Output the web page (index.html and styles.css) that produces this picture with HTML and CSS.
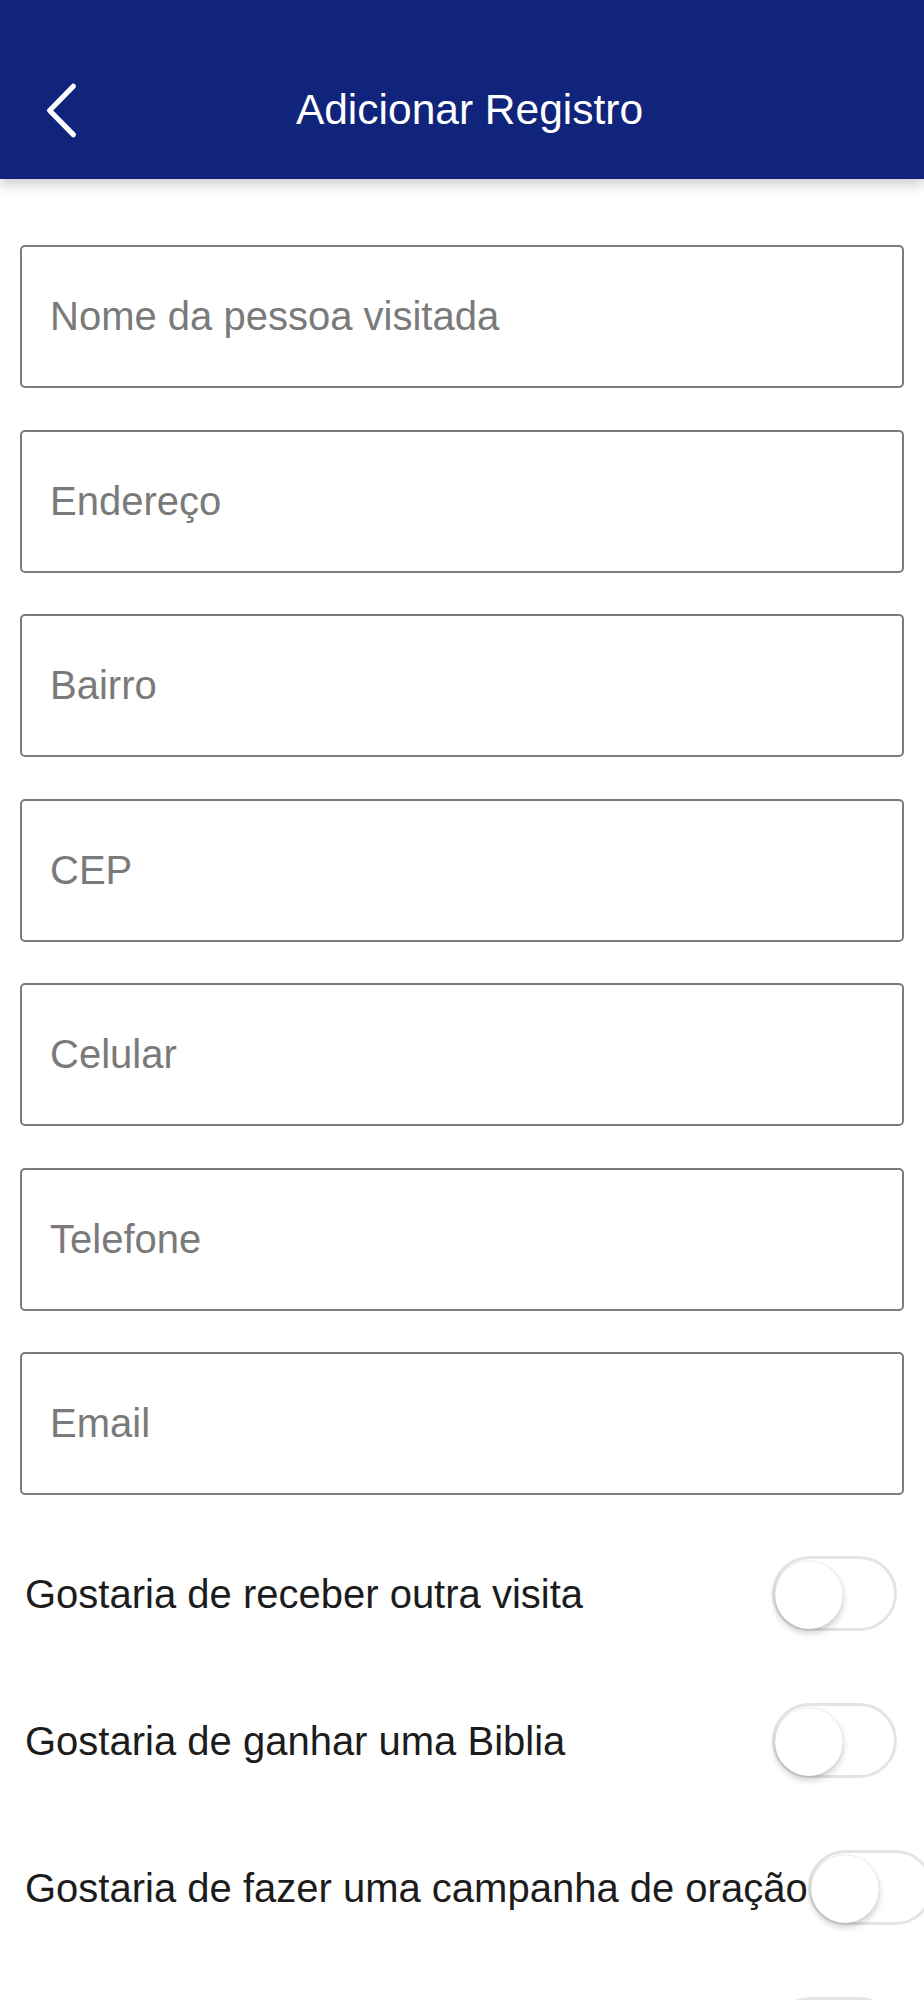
FILE: index.html
```html
<!DOCTYPE html>
<html lang="pt-BR">
<head>
<meta charset="utf-8">
<title>Adicionar Registro</title>
<link rel="stylesheet" href="styles.css">
</head>
<body>
<header class="topbar">
  <div class="topbar-row">
    <button class="back" aria-label="Voltar">
      <svg width="40" height="60" viewBox="0 0 40 60" aria-hidden="true">
        <polyline points="33,5 8,30.5 33,56" fill="none" stroke="#ffffff" stroke-width="5.5" stroke-linecap="round" stroke-linejoin="round"/>
      </svg>
    </button>
    <h1 class="title">Adicionar Registro</h1>
    <div class="spacer"></div>
  </div>
</header>
<main class="form">
  <input class="field" type="text" placeholder="Nome da pessoa visitada">
  <input class="field" type="text" placeholder="Endereço">
  <input class="field" type="text" placeholder="Bairro">
  <input class="field" type="text" placeholder="CEP">
  <input class="field" type="text" placeholder="Celular">
  <input class="field" type="text" placeholder="Telefone">
  <input class="field" type="text" placeholder="Email">

  <div class="switch-row">
    <span class="switch-label">Gostaria de receber outra visita</span>
    <span class="toggle"><span class="knob"></span></span>
  </div>
  <div class="switch-row">
    <span class="switch-label">Gostaria de ganhar uma Biblia</span>
    <span class="toggle"><span class="knob"></span></span>
  </div>
  <div class="switch-row">
    <span class="switch-label">Gostaria de fazer uma campanha de oração</span>
    <span class="toggle"><span class="knob"></span></span>
  </div>
  <div class="switch-row">
    <span class="toggle"><span class="knob"></span></span>
  </div>
</main>
</body>
</html>
```
FILE: styles.css
```css
* { box-sizing: border-box; }

html, body {
  margin: 0;
  padding: 0;
  background: #ffffff;
  overflow-x: hidden;
}

body {
  font-family: "Liberation Sans", Arial, Helvetica, sans-serif;
  width: 924px;
}

.topbar {
  background: #0f247a;
  height: 179px;
  padding-top: 40px;
  box-shadow: 0 5px 12px rgba(0, 0, 0, 0.22);
  position: relative;
  z-index: 2;
}

.topbar-row {
  height: 139px;
  display: flex;
  align-items: center;
}

.back {
  width: 80px;
  height: 80px;
  padding: 0 0 0 42px;
  margin: 0;
  border: none;
  background: transparent;
  display: flex;
  align-items: center;
  cursor: pointer;
}

.back svg { display: block; }

.title {
  flex: 1;
  margin: 0;
  text-align: center;
  color: #ffffff;
  font-weight: normal;
  font-size: 42.5px;
  line-height: 1;
  padding-top: 1px;
}

.spacer { width: 65px; }

.form {
  padding: 66px 20px 0 20px;
  display: flex;
  flex-direction: column;
}

.field {
  display: block;
  width: 884px;
  height: 143px;
  margin: 0 0 41.5px 0;
  border: 2px solid #7b7b7b;
  border-radius: 5px;
  padding: 0 20px 0 28px;
  font-family: "Liberation Sans", Arial, Helvetica, sans-serif;
  font-size: 40px;
  color: #222222;
  background: #ffffff;
  outline: none;
}

.field::placeholder {
  color: #7a7a7a;
  opacity: 1;
}

.form .field:nth-of-type(7) { margin-bottom: 0; }

.switch-row {
  height: 147px;
  display: flex;
  align-items: center;
  padding: 0 7px 0 5px;
}

.form .field + .switch-row { margin-top: 25px; }

.switch-label {
  flex-shrink: 0;
  white-space: nowrap;
  font-size: 40px;
  color: #1c1c1c;
  padding-top: 2px;
}

.toggle {
  flex-shrink: 0;
  margin-left: auto;
  width: 125px;
  height: 75px;
  border: 3px solid #e4e4e4;
  border-radius: 38px;
  background: #ffffff;
  display: flex;
  align-items: center;
}

.knob {
  width: 68px;
  height: 68px;
  border-radius: 50%;
  background: #ffffff;
  box-shadow: 0 4px 7px rgba(0, 0, 0, 0.2), 0 0 1px rgba(0, 0, 0, 0.25);
  margin-top: 3px;
}
```
